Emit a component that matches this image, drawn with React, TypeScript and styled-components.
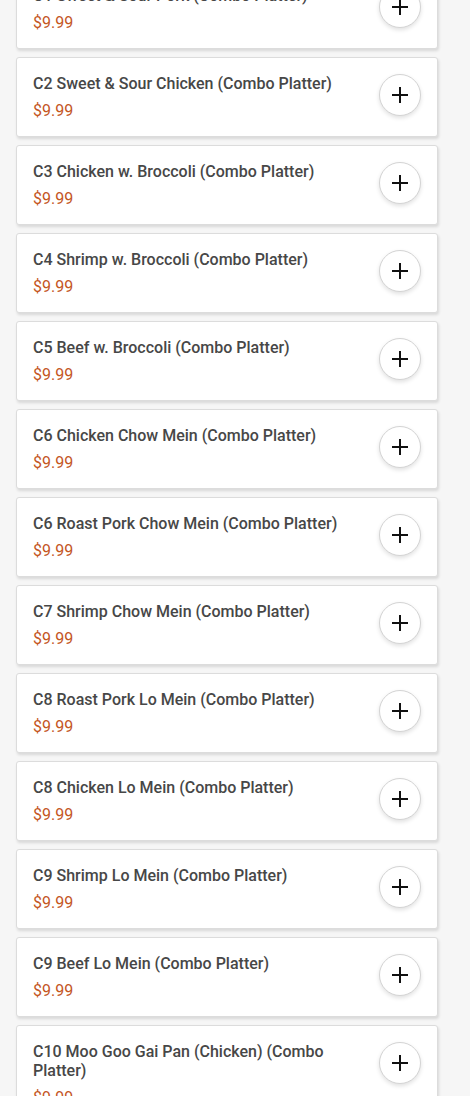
import React, {FC} from "react";
import styled, {createGlobalStyle} from 'styled-components';

const GlobalStyle = createGlobalStyle`
  html, body {
    margin: 0;
    padding: 0;
    background-color: #f6f6f6;
    font-family: Roboto, "Liberation Sans", Arial, sans-serif;
  }
`;

const items = [
    'C1 Sweet & Sour Pork (Combo Platter)',
    'C2 Sweet & Sour Chicken (Combo Platter)',
    'C3 Chicken w. Broccoli (Combo Platter)',
    'C4 Shrimp w. Broccoli (Combo Platter)',
    'C5 Beef w. Broccoli (Combo Platter)',
    'C6 Chicken Chow Mein (Combo Platter)',
    'C6 Roast Pork Chow Mein (Combo Platter)',
    'C7 Shrimp Chow Mein (Combo Platter)',
    'C8 Roast Pork Lo Mein (Combo Platter)',
    'C8 Chicken Lo Mein (Combo Platter)',
    'C9 Shrimp Lo Mein (Combo Platter)',
    'C9 Beef Lo Mein (Combo Platter)',
    'C10 Moo Goo Gai Pan (Chicken) (Combo Platter)',
    'C11 Pepper Steak w. Onion (Combo Platter)',
];

const PlusIcon: FC = () => (
    <svg width="18" height="18" viewBox="0 0 18 18" fill="none">
        <path d="M9 1v16M1 9h16" stroke="#111" strokeWidth="2"/>
    </svg>
);

export default function App() {
    return (
        <>
            <GlobalStyle/>
            <Page>
                <MenuList>
                    {items.map((name, i) => (
                        <ItemCard key={i}>
                            <ItemInfo>
                                <ItemName>{name}</ItemName>
                                <ItemPrice>$9.99</ItemPrice>
                            </ItemInfo>
                            <AddButton aria-label={`Add ${name}`}>
                                <PlusIcon/>
                            </AddButton>
                        </ItemCard>
                    ))}
                </MenuList>
            </Page>
        </>
    );
}

const Page = styled.div`
  height: 1096px;
  overflow: hidden;
  padding-left: 16px;
`;

const MenuList = styled.div`
  display: flex;
  flex-direction: column;
  gap: 8px;
  width: 422px;
  margin-top: -31px;
`;

const ItemCard = styled.div`
  display: flex;
  align-items: flex-start;
  justify-content: space-between;
  gap: 16px;
  box-sizing: border-box;
  min-height: 80px;
  padding: 16px;
  background-color: #fff;
  border: 1px solid #dcdcdc;
  border-radius: 3px;
  box-shadow: 1px 2px 3px rgba(0, 0, 0, 0.12);
`;

const ItemInfo = styled.div`
  display: flex;
  flex-direction: column;
  gap: 9px;
  flex: 1;
  padding-right: 10px;
`;

const ItemName = styled.div`
  font-size: 16px;
  font-weight: 500;
  line-height: 19px;
  color: #474747;
`;

const ItemPrice = styled.div`
  font-size: 16px;
  line-height: 18px;
  color: #c4561f;
`;

const AddButton = styled.button`
  flex: none;
  display: flex;
  align-items: center;
  justify-content: center;
  width: 42px;
  height: 42px;
  padding: 0;
  border-radius: 50%;
  border: 1px solid #d4d4d4;
  background-color: #fff;
  box-shadow: 0 2px 4px rgba(0, 0, 0, 0.12);
  cursor: pointer;
`;
